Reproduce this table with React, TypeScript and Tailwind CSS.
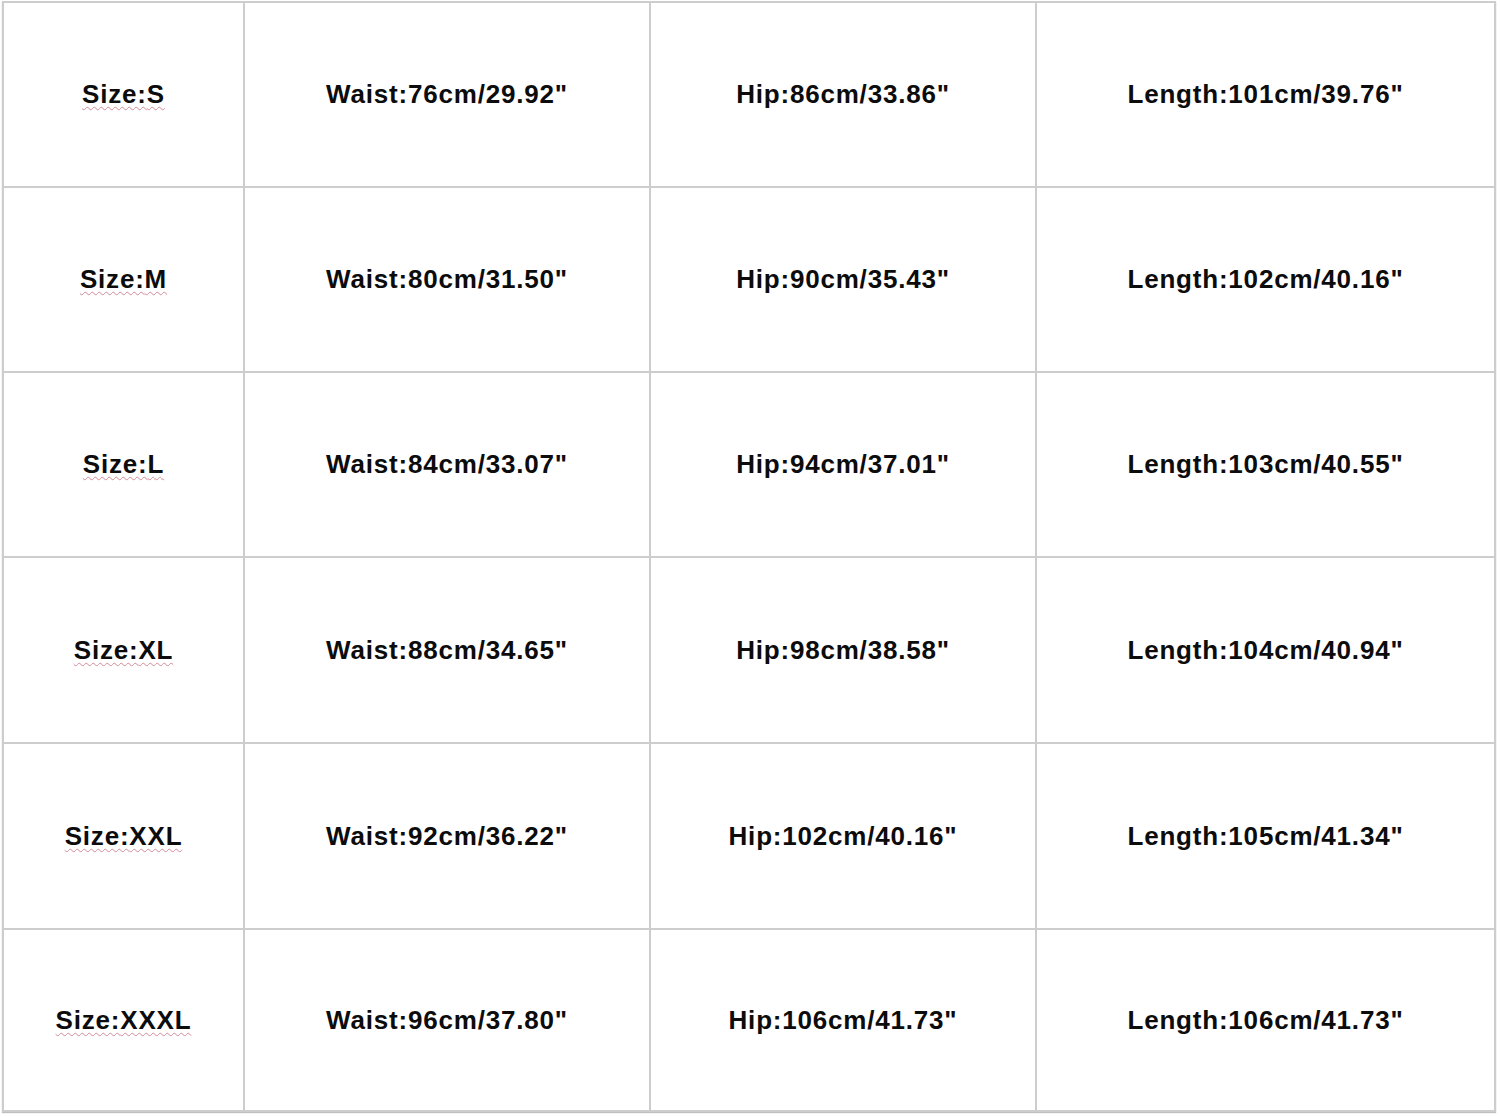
import React from "react";

const rows = [
  ["S", "76cm/29.92\"", "86cm/33.86\"", "101cm/39.76\""],
  ["M", "80cm/31.50\"", "90cm/35.43\"", "102cm/40.16\""],
  ["L", "84cm/33.07\"", "94cm/37.01\"", "103cm/40.55\""],
  ["XL", "88cm/34.65\"", "98cm/38.58\"", "104cm/40.94\""],
  ["XXL", "92cm/36.22\"", "102cm/40.16\"", "105cm/41.34\""],
  ["XXXL", "96cm/37.80\"", "106cm/41.73\"", "106cm/41.73\""],
];

const cell =
  "bg-white flex items-center justify-center text-[26px] font-bold tracking-[0.8px] text-[#0c0c0c]";

export default function App() {
  return (
    <div className="w-[1500px] h-[1116px] bg-white pl-[2px] pt-[1px] font-['Liberation_Sans',Arial,sans-serif]">
      <div className="grid w-[1494px] grid-cols-[239px_404px_384px_457px] grid-rows-[183px_183px_183px_184px_184px_180px] gap-[2px] bg-[#cdcdcd] p-[2px] shadow-[0_1px_1px_rgba(0,0,0,0.25)]">
        {rows.map((r) => (
          <React.Fragment key={r[0]}>
            <div className={cell}>
              <span className="underline decoration-wavy decoration-[#d48a96] decoration-1 underline-offset-[3px]">
                Size:{r[0]}
              </span>
            </div>
            <div className={cell}>Waist:{r[1]}</div>
            <div className={cell}>Hip:{r[2]}</div>
            <div className={cell}>Length:{r[3]}</div>
          </React.Fragment>
        ))}
      </div>
    </div>
  );
}
